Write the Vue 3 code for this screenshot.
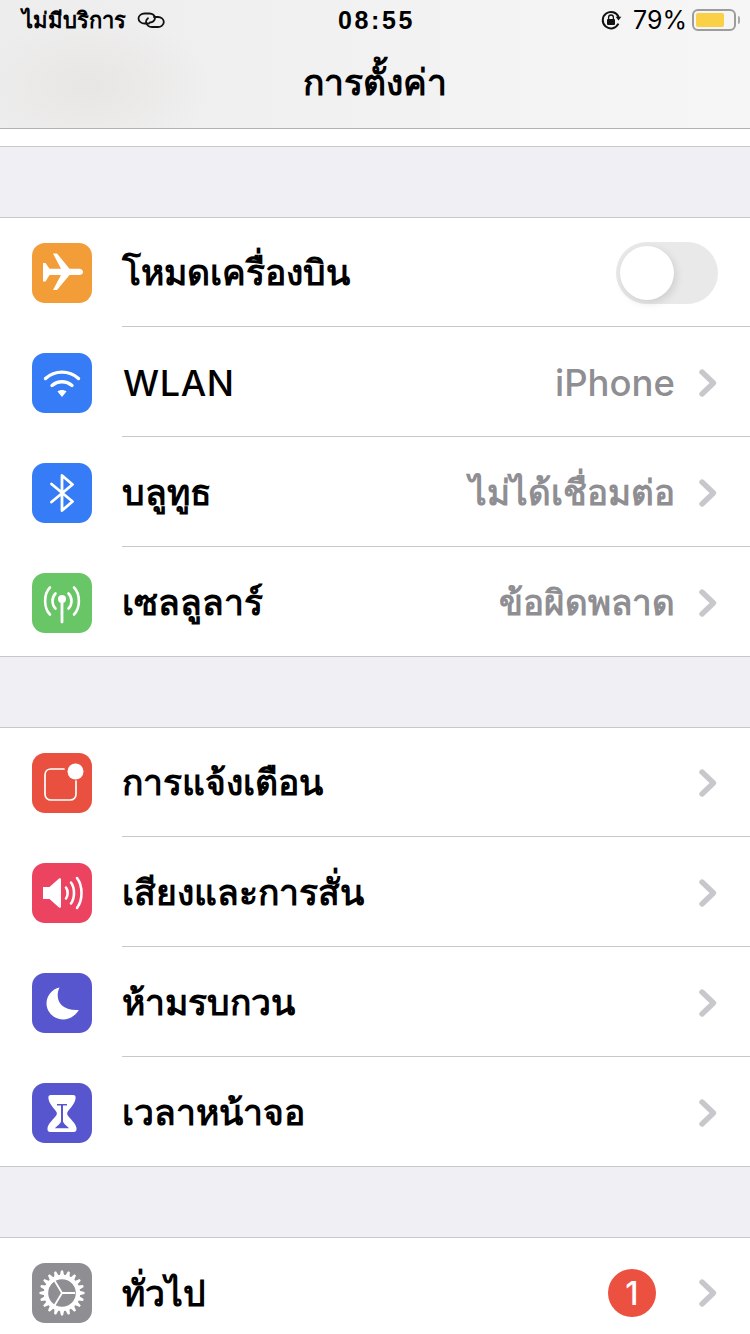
<script setup>
const groups = [
  [
    { key: 'plane', color: '#f29d38', label: 'โหมดเครื่องบิน', toggle: true },
    { key: 'wifi', color: '#367cf7', label: 'WLAN', value: 'iPhone', latin: true },
    { key: 'bt', color: '#367cf7', label: 'บลูทูธ', value: 'ไม่ได้เชื่อมต่อ' },
    { key: 'cell', color: '#68c667', label: 'เซลลูลาร์', value: 'ข้อผิดพลาด' },
  ],
  [
    { key: 'notif', color: '#ea503f', label: 'การแจ้งเตือน' },
    { key: 'sound', color: '#ec4360', label: 'เสียงและการสั่น' },
    { key: 'moon', color: '#5856cf', label: 'ห้ามรบกวน' },
    { key: 'hour', color: '#5856cf', label: 'เวลาหน้าจอ' },
  ],
  [{ key: 'gear', color: '#8e8e93', label: 'ทั่วไป', badge: '1' }],
]
const teeth = Array.from({ length: 20 }, (_, i) => i * 18)
</script>

<template>
  <div class="page">
    <header class="nav">
      <div class="status">
        <div class="status-left">
          <span class="carrier">ไม่มีบริการ</span>
          <svg class="link" width="28" height="18" viewBox="0 0 28 18" fill="none" stroke="#111" stroke-width="1.8" stroke-linecap="round">
            <path d="M12 12.5 H7.5 C4.5 12.5 1.5 10.5 1.5 7.5 C1.5 4.5 4.5 2.5 7.5 2.5 H12.5 C15.5 2.5 18 4.5 18 7 C18 9.6 15.5 11.5 13 11.5" />
            <path d="M17 6 H21 C24 6 26.8 8 26.8 11 C26.8 14 24 16 21 16 H15 C12 16 9 14 9 11 C9 9.4 9.8 8.2 11 7.3" />
          </svg>
        </div>
        <div class="time">08:55</div>
        <div class="status-right">
          <svg width="22" height="22" viewBox="0 0 22 22">
            <path d="M18.6 8.2 A8.2 8.2 0 1 0 18.4 14.6" fill="none" stroke="#111" stroke-width="2" />
            <path d="M15.7 7.8 H21.3 L18.5 11.6 Z" fill="#111" />
            <rect x="7" y="10" width="8" height="6" rx="1" fill="#111" />
            <path d="M8.6 10 V8.4 A2.4 2.4 0 0 1 13.4 8.4 V10" fill="none" stroke="#111" stroke-width="1.3" />
          </svg>
          <span class="pct">79%</span>
          <div class="battery"><div class="battery-fill"></div></div>
          <div class="battery-cap"></div>
        </div>
      </div>
      <div class="title">การตั้งค่า</div>
    </header>

    <div class="white-strip"></div>

    <template v-for="(group, g) in groups" :key="g">
      <div class="gap"></div>
      <section class="group">
        <div v-for="row in group" :key="row.key" class="row">
          <div class="icon" :style="{ background: row.color }">
            <svg width="60" height="60" viewBox="0 0 60 60">
              <template v-if="row.key === 'plane'">
                <path fill="#fff" d="M11 20 L13.5 20 L17.5 25.8 L29 25.8 L21 10.5 L25 10.5 L37.5 25.8 L47 25.8 C49.5 25.8 51 27.5 51 29 C51 30.8 49.5 32 47 32 L37.5 32 L25 47 L21 47 L29 32 L17.5 32 L13.5 38.5 L11 38.5 Z" />
              </template>
              <template v-else-if="row.key === 'wifi'">
                <g fill="none" stroke="#fff" stroke-width="3.4" stroke-linecap="round">
                  <path d="M13.5 25.5 C23 17 37 17 46.5 25.5" />
                  <path d="M20 32.5 C26 27.5 34 27.5 40 32.5" />
                </g>
                <path fill="#fff" d="M25.5 38.5 C28 36.5 32 36.5 34.5 38.5 L30 44 Z" />
              </template>
              <template v-else-if="row.key === 'bt'">
                <path fill="none" stroke="#fff" stroke-width="2.8" stroke-linecap="round" stroke-linejoin="round" d="M19.5 21 L40.5 38.5 L30 47.5 L30 12.5 L40.5 21.5 L19.5 39" />
              </template>
              <template v-else-if="row.key === 'cell'">
                <g fill="none" stroke="#fff" stroke-width="2.6" stroke-linecap="round">
                  <path d="M18 14.5 C11.5 21 11.5 35 18 41.5" />
                  <path d="M42 14.5 C48.5 21 48.5 35 42 41.5" />
                  <path d="M23.5 20.5 C19.5 24.5 19.5 31.5 23.5 35.5" />
                  <path d="M36.5 20.5 C40.5 24.5 40.5 31.5 36.5 35.5" />
                  <path d="M30 26 V49" stroke-width="2.8" />
                </g>
                <circle cx="30" cy="26" r="4" fill="#fff" />
              </template>
              <template v-else-if="row.key === 'notif'">
                <path fill="none" stroke="#fff" stroke-width="1.7" stroke-linecap="round" d="M32 16 H19 C15.5 16 13 18.5 13 22 V41 C13 44.5 15.5 47 19 47 H38 C41.5 47 44 44.5 44 41 V28" />
                <circle cx="43.5" cy="18.5" r="8" fill="#fff" />
              </template>
              <template v-else-if="row.key === 'sound'">
                <path fill="#fff" d="M11 24 H17.5 L27 15.5 C28 14.8 29 15.4 29 16.5 V43.5 C29 44.6 28 45.2 27 44.5 L17.5 36 H11 Z" />
                <g fill="none" stroke="#fff" stroke-width="2.6" stroke-linecap="round">
                  <path d="M34 24.5 C36.2 27.5 36.2 32.5 34 35.5" />
                  <path d="M39 19.5 C43 25 43 35 39 40.5" />
                  <path d="M45 15 C51 23 51 37 45 45" />
                </g>
              </template>
              <template v-else-if="row.key === 'moon'">
                <path fill="#fff" d="M27.5 14.5 C23 24 26 38 46.8 37 C43.5 43 37 46.5 31.5 46.5 C22 46.5 14.5 39 14.5 30.5 C14.5 23 20 16 27.5 14.5 Z" />
              </template>
              <template v-else-if="row.key === 'hour'">
                <path fill="#fff" fill-rule="evenodd" d="M19 12 H41 C43 12 43.8 13.2 43.6 15 C43 21 38 25 35.5 29 C35 30 35 31 35.5 32 C38 36 43.8 40 44.5 45 C44.9 48 43.5 49 41.5 49 H18.5 C16.5 49 15.1 48 15.5 45 C16.2 40 22 36 24.5 32 C25 31 25 30 24.5 29 C22 25 17 21 16.4 15 C16.2 13.2 17 12 19 12 Z M25 21 H35 V22.6 H31 V38 C31 40.5 35 43 37 45.2 H23 C25 43 29 40.5 29 38 V22.6 H25 Z" />
              </template>
              <template v-else>
                <g fill="#fff">
                  <path v-for="a in teeth" :key="a" d="M27.8 12.5 L29 7.5 H31 L32.2 12.5 Z" :transform="`rotate(${a} 30 30)`" />
                </g>
                <circle cx="30" cy="30" r="16" fill="none" stroke="#fff" stroke-width="4.4" />
                <path d="M30 30 H43 M30 30 L22.5 17.5 M30 30 L22.5 42.5" fill="none" stroke="#fff" stroke-width="1.8" />
              </template>
            </svg>
          </div>
          <div class="body">
            <span class="label" :class="{ latin: row.latin }">{{ row.label }}</span>
            <div v-if="row.toggle" class="toggle"><div class="knob"></div></div>
            <template v-else>
              <span v-if="row.value" class="value" :class="{ latin: row.latin }">{{ row.value }}</span>
              <span v-if="row.badge" class="badge">{{ row.badge }}</span>
              <svg class="chev" width="20" height="30" viewBox="0 0 20 30" fill="none" stroke="#c7c7cc" stroke-width="5.4" stroke-linecap="round" stroke-linejoin="round">
                <path d="M4 4 L15.5 15 L4 26" />
              </svg>
            </template>
          </div>
        </div>
      </section>
    </template>
  </div>
</template>

<style scoped>
.page {
  width: 750px;
  height: 1334px;
  overflow: hidden;
  background: #efeff4;
  font-family: "Noto Sans", "Inter", "DejaVu Sans", sans-serif;
  color: #000;
}
.nav {
  height: 128px;
  border-bottom: 1px solid #b2b2b2;
  background:
    radial-gradient(ellipse 120px 70px at 90px 85px, #e8e6e4, rgba(232, 230, 228, 0) 100%),
    linear-gradient(90deg, #ededed, #f6f6f6);
}
.status {
  height: 40px;
  display: flex;
  align-items: center;
  justify-content: space-between;
  position: relative;
  padding: 0 10px 0 22px;
}
.status-left {
  display: flex;
  align-items: center;
  gap: 11px;
  font-size: 22px;
}
.carrier {
  font-weight: 600;
  font-size: 22px;
}
.time {
  position: absolute;
  left: 338px;
  font-family: "Liberation Sans", sans-serif;
  font-weight: 700;
  font-size: 25px;
  letter-spacing: 2.6px;
}
.status-right {
  display: flex;
  align-items: center;
}
.pct {
  font-family: "Inter", sans-serif;
  font-size: 25px;
  margin-left: 11px;
  margin-right: 5px;
}
.battery {
  width: 44px;
  height: 22px;
  box-sizing: border-box;
  border: 2px solid #9c9c9c;
  border-radius: 6px;
  padding: 2px;
}
.battery-fill {
  width: 28px;
  height: 14px;
  background: #fad047;
  border-radius: 2px;
}
.battery-cap {
  width: 2px;
  height: 8px;
  margin-left: 2px;
  background: #a8a8a8;
  border-radius: 0 2px 2px 0;
}
.title {
  height: 88px;
  margin-top: -2px;
  display: flex;
  justify-content: center;
  align-items: center;
  font-size: 35.5px;
  font-weight: 700;
}
.white-strip {
  height: 17px;
  background: #fff;
  border-bottom: 1px solid #c8c7cc;
}
.gap {
  height: 70px;
}
.group {
  background: #fff;
  border-top: 1px solid #c8c7cc;
  border-bottom: 1px solid #c8c7cc;
}
.row {
  height: 110px;
  display: flex;
  padding-left: 32px;
  box-sizing: border-box;
}
.row:first-child,
.row:last-child {
  height: 109px;
}
.icon {
  width: 60px;
  height: 60px;
  flex: none;
  margin-top: 26px;
  border-radius: 13px;
  overflow: hidden;
}
.row:first-child .icon {
  margin-top: 25px;
}
.icon svg {
  display: block;
}
.body {
  flex: 1;
  box-sizing: border-box;
  margin-left: 30px;
  padding-top: 2px;
  padding-right: 32px;
  border-bottom: 1px solid #c8c7cc;
  display: flex;
  align-items: center;
}
.row:first-child .body {
  padding-top: 1px;
}
.row:last-child .body {
  border-bottom: none;
}
.label {
  flex: 1;
  font-size: 35.5px;
  font-weight: 600;
}
.label.latin {
  font-family: "Inter", sans-serif;
  font-size: 36px;
  font-weight: 500;
  letter-spacing: 0.6px;
  padding-left: 1px;
}
.value {
  font-size: 35px;
  font-weight: 600;
  color: #8e8e93;
  margin-right: 23px;
}
.value.latin {
  font-family: "Inter", sans-serif;
  font-size: 36.5px;
  font-weight: 500;
}
.badge {
  width: 48px;
  height: 48px;
  border-radius: 50%;
  background: #ec5040;
  color: #fff;
  font-family: "Inter", sans-serif;
  font-size: 32px;
  font-weight: 500;
  display: flex;
  align-items: center;
  justify-content: center;
  margin-right: 42px;
}
.chev {
  flex: none;
}
.toggle {
  width: 102px;
  height: 62px;
  border-radius: 31px;
  background: #e9e9ea;
  position: relative;
}
.knob {
  position: absolute;
  left: 4px;
  top: 4px;
  width: 54px;
  height: 54px;
  border-radius: 50%;
  background: #fff;
  box-shadow: 2px 3px 8px rgba(0, 0, 0, 0.12);
}
</style>

<style>
html, body {
  margin: 0;
  background: #efeff4;
}
</style>
